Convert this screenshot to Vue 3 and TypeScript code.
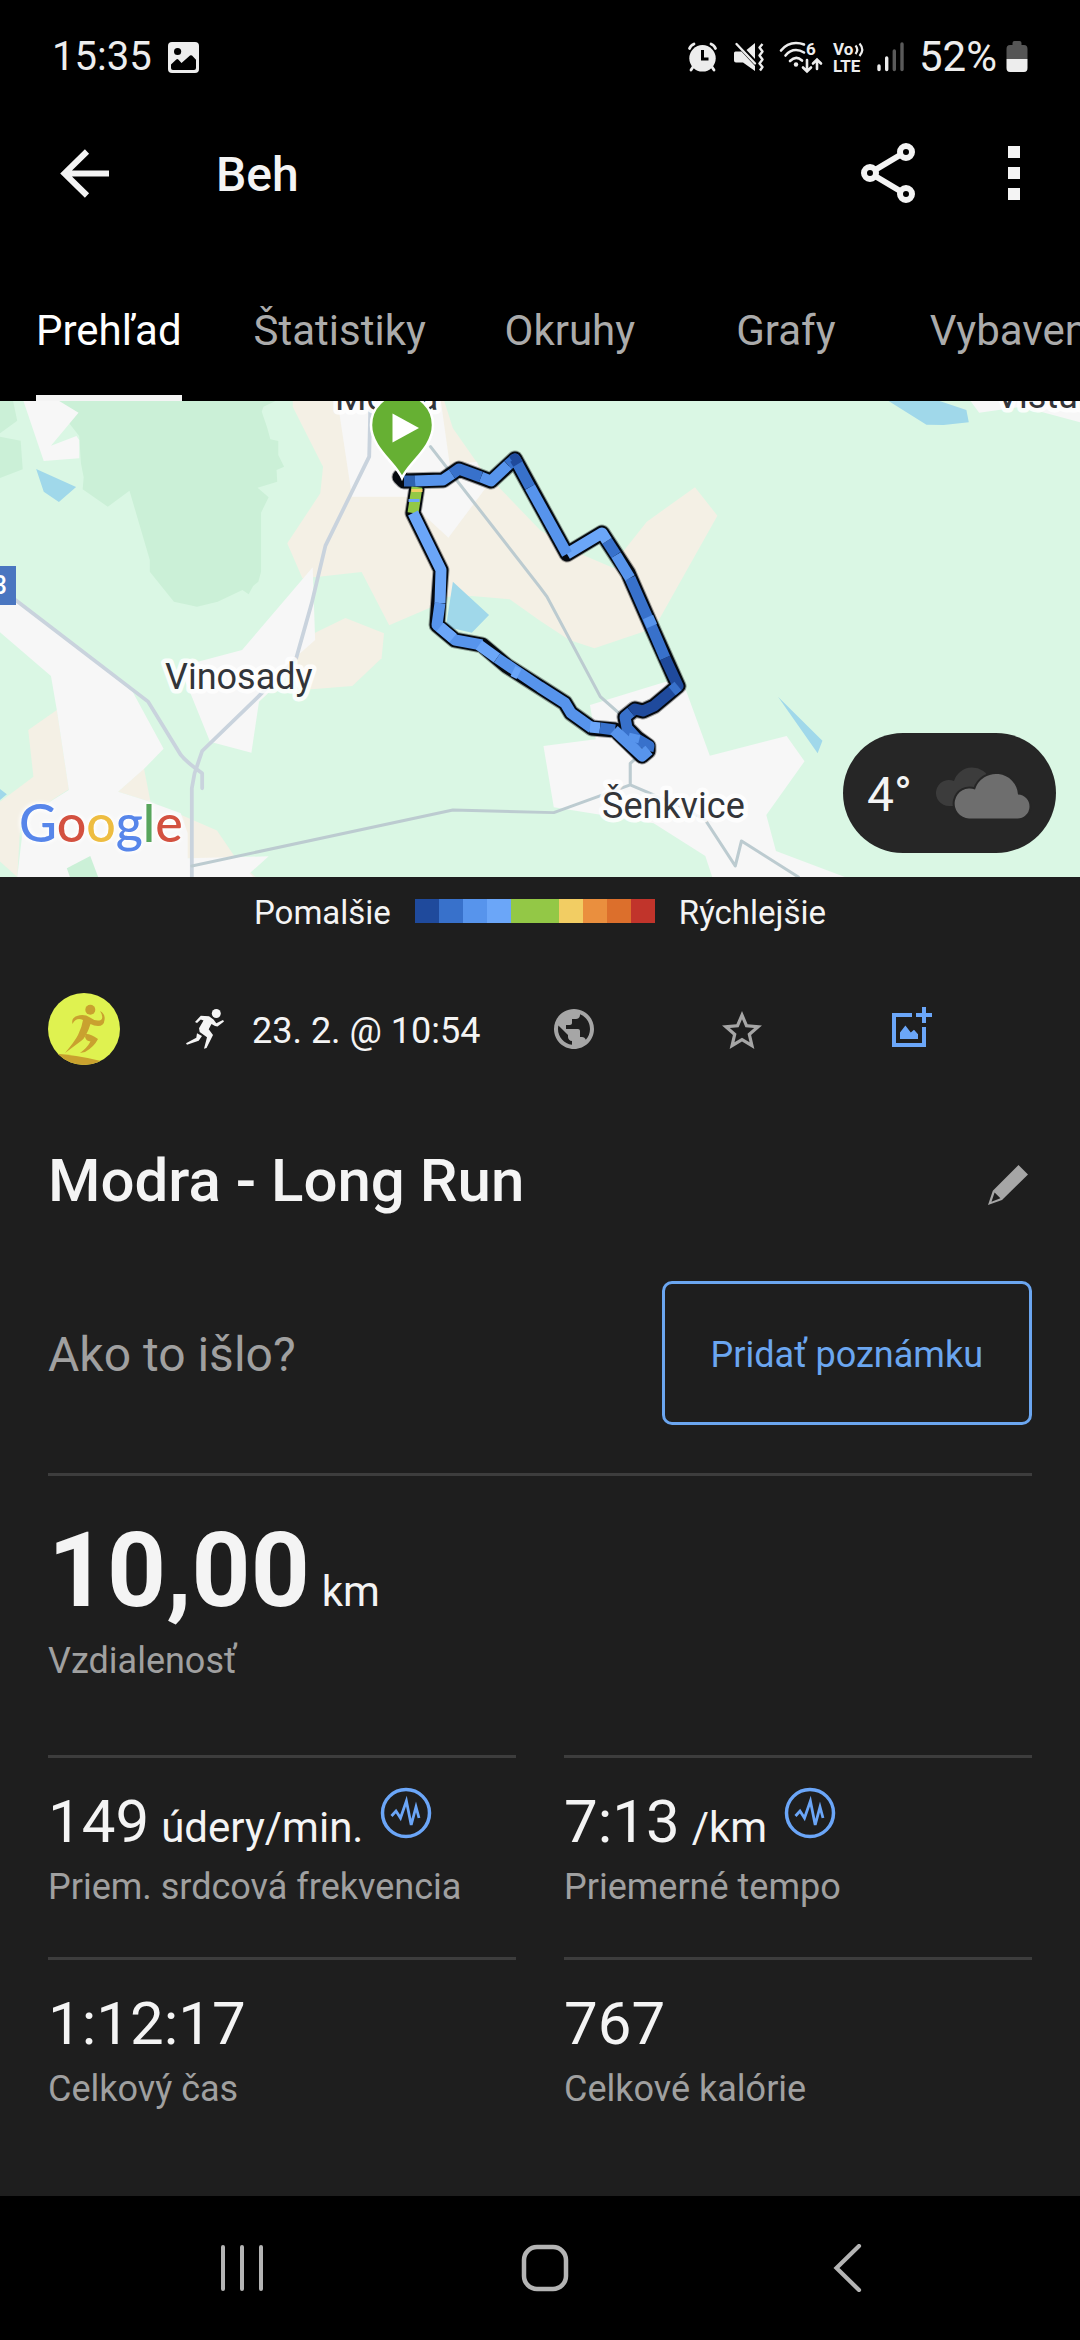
<script setup lang="ts">
import { ref } from 'vue'

interface RouteSegment {
  color: string
  points: string
}

interface Stat {
  value: string
  unit?: string
  label: string
  chart?: boolean
}

const tabs: string[] = ['Prehľad', 'Štatistiky', 'Okruhy', 'Grafy', 'Vybavenie']
const activeTab = ref<string>('Prehľad')

const pace: string[] = [
  '#1f4a9c', '#3871cb', '#5794ec', '#6ba6f8', '#93c846',
  '#93c846', '#f2cd63', '#ea8f3e', '#dc6f2c', '#c1342b',
]

const outline =
  '417,86 413,112 441,169 437,224 455,239 482,244 507,265 540,286 565,302 571,312 592,327 615,329 642,355 648,350 648,345 637,337 627,327 625,316 635,308 643,310 654,305 678,285 653,229 628,172 602,132 567,153 515,58 491,80 459,68 443,79 404,80 400,76'

const segments: RouteSegment[] = [
  { color: '#93c846', points: '417,86 413,112' },
  { color: '#f2cd63', points: '417,88 417,91' },
  { color: '#6ba6f8', points: '414,98 414,101' },
  { color: '#6ba6f8', points: '413,112 441,169 440,202' },
  { color: '#5794ec', points: '440,202 437,224 455,239 482,244' },
  { color: '#6ba6f8', points: '440,226 453,237' },
  { color: '#6ba6f8', points: '479,244 497,257' },
  { color: '#5794ec', points: '497,257 540,286 565,302 571,312 592,327' },
  { color: '#6ba6f8', points: '513,270 519,273' },
  { color: '#6ba6f8', points: '590,326 600,327' },
  { color: '#3871cb', points: '600,327 615,329' },
  { color: '#3871cb', points: '648,350 649,345 637,338 627,327 625,316 631,311' },
  { color: '#5794ec', points: '614,329 642,355 649,349' },
  { color: '#5794ec', points: '633,341 635,333' },
  { color: '#1f4a9c', points: '631,311 635,308 643,310 654,305 678,285 665,257' },
  { color: '#3871cb', points: '672,290 678,285' },
  { color: '#3871cb', points: '665,257 653,229 630,177' },
  { color: '#5794ec', points: '652,225 648,216' },
  { color: '#5794ec', points: '630,177 616,154' },
  { color: '#3871cb', points: '616,154 607,140' },
  { color: '#6ba6f8', points: '607,140 602,132 567,153' },
  { color: '#5794ec', points: '567,153 530,86' },
  { color: '#3871cb', points: '530,86 515,58 508,64' },
  { color: '#1f4a9c', points: '518,63 515,58 512,60' },
  { color: '#5794ec', points: '508,64 491,80 481,76' },
  { color: '#3871cb', points: '481,76 459,68 452,73' },
  { color: '#5794ec', points: '452,73 443,79 415,80' },
  { color: '#2f62b0', points: '415,80 404,80' },
]

const stats: Stat[] = [
  { value: '149', unit: 'údery/min.', label: 'Priem. srdcová frekvencia', chart: true },
  { value: '7:13', unit: '/km', label: 'Priemerné tempo', chart: true },
  { value: '1:12:17', label: 'Celkový čas' },
  { value: '767', label: 'Celkové kalórie' },
]
</script>

<template>
  <div class="screen">
    <header class="header">
      <div class="status">
        <span class="status-text">15:35</span>
        <svg class="status-photo" width="31" height="31" viewBox="0 0 31 31" aria-hidden="true">
          <rect width="31" height="31" rx="4" fill="#ededed" />
          <circle cx="9.6" cy="9.5" r="3.6" fill="#000" />
          <path d="M3 22.5L8.3 17.5Q9.3 16.700 10.300 17.600L13.500 21L22 13.500Q23 12.800 24 13.600L28 17.800V26Q28 28 26 28H5Q3 28 3 26Z" fill="#000" />
        </svg>
        <div class="status-icons">
          <svg width="36" height="32" viewBox="0 0 36 32" aria-hidden="true">
            <circle cx="16.500" cy="17.300" r="13.200" fill="#ededed" />
            <path d="M3.500 7.500Q4.500 4.500 8 3M29.500 7.500Q28.500 4.500 25 3M7 26L5 29M26 26L28 29" fill="none" stroke="#ededed" stroke-width="2.800" stroke-linecap="round" />
            <path d="M16.500 9V18H22.500" fill="none" stroke="#000" stroke-width="3" />
          </svg>
          <svg width="36" height="32" viewBox="0 0 36 32" aria-hidden="true">
            <path d="M4.500 10.500H10.500L24 25V30L12 21.500H5Q3 21.500 3 19.500V12Q3 10.500 4.500 10.500ZM15.500 9L24 2V18Z" fill="#ededed" />
            <path d="M5.500 3L24 22.500" stroke="#ededed" stroke-width="2.400" stroke-linecap="round" />
            <path d="M31.500 3L28.500 6.500L31.500 10.500L28.500 14.500L31.500 18.500L28.500 22.500L31.500 26L29 29.500" fill="none" stroke="#ededed" stroke-width="2.400" stroke-linejoin="round" />
          </svg>
          <svg width="48" height="32" viewBox="0 0 48 32" aria-hidden="true">
            <g fill="none" stroke="#ededed" stroke-width="2.600" stroke-linecap="round">
              <path d="M5 9.500Q11 2 20 2Q24.500 2 28 3.500M9.500 14.500Q14 9 20 9Q24 9 28 11.500M14 20Q20 14 26 19.500" />
              <path d="M31 19V30M27 26.500L31 30.500L35 26.500M41 28V18.500M37 22.500L41 18.500L45 22.500" />
            </g>
            <circle cx="20" cy="23.500" r="2.200" fill="#ededed" />
            <text x="30" y="14" class="glyph">6</text>
          </svg>
          <svg width="32" height="32" viewBox="0 0 32 32" aria-hidden="true">
            <text x="0" y="14" class="glyph">Vo</text>
            <text x="0" y="31" class="glyph">LTE</text>
            <path d="M22.500 4.500Q26 8.500 22.500 13M26.500 2.500Q32 8.500 26.500 15" fill="none" stroke="#ededed" stroke-width="2.200" />
          </svg>
          <svg width="36" height="32" viewBox="0 0 36 32" aria-hidden="true">
            <g stroke-width="3.400" stroke-linecap="round">
              <path d="M5 25V28.500M12.700 17V28.500" stroke="#ededed" />
              <path d="M20.300 10V28.500M28 3V28.500" stroke="#5a5a5a" />
            </g>
          </svg>
          <span class="status-text battery-level">52%</span>
          <svg width="22" height="32" viewBox="0 0 22 32" aria-hidden="true">
            <path d="M6.500 4V2Q6.500 0 8.500 0H13.500Q15.500 0 15.500 2V4H18Q21.500 4 21.500 8V18H0.500V8Q0.500 4 4 4Z" fill="#555" />
            <path d="M0.500 18H21.500V27Q21.500 31 18 31H4Q0.500 31 0.500 27Z" fill="#ededed" />
          </svg>
        </div>
      </div>

      <div class="toolbar">
        <button class="icon-button" type="button" aria-label="Späť">
          <svg width="72" height="72" viewBox="0 0 72 72">
            <path d="M39 14.500L16.500 36.500L39 58.500M16 36.500H61" fill="none" stroke="#f4f4f4" stroke-width="6" />
          </svg>
        </button>
        <h1 class="toolbar-title">Beh</h1>
        <button class="icon-button" type="button" aria-label="Zdieľať">
          <svg width="72" height="72" viewBox="0 0 72 72" fill="none" stroke="#f4f4f4" stroke-width="6">
            <path d="M23 33L49 17.500M23 39L49 54.500" />
            <circle cx="18" cy="36" r="6" />
            <circle cx="54" cy="15" r="6" />
            <circle cx="54" cy="57" r="6" />
          </svg>
        </button>
        <button class="icon-button" type="button" aria-label="Viac">
          <svg width="72" height="72" viewBox="0 0 72 72" fill="#f4f4f4">
            <path d="M30 9h12v12H30zM30 30h12v12H30zM30 51h12v12H30z" />
          </svg>
        </button>
      </div>

      <nav class="tabs">
        <button
          v-for="tab in tabs"
          :key="tab"
          type="button"
          class="tab"
          :class="{ active: tab === activeTab }"
          @click="activeTab = tab"
        >
          <span class="tab-label">{{ tab }}</span>
        </button>
      </nav>
    </header>

    <section class="map">
      <svg class="map-canvas" viewBox="0 0 1080 476" preserveAspectRatio="xMidYMid slice" role="img" aria-label="Mapa trasy">
        <rect width="1080" height="476" fill="#daf7e4" />
        <g transform="matrix(0.3444 0 0 0.3333 0 -11)">
          <path class="forest" d="M150 33H800L765 50L760 65L775 110L785 148L808 153V195L825 230L803 240L805 275L748 293L780 322L758 368V545L750 575L735 588L722 613L704 600L632 635L572 650L505 635L435 545V510L376 302L313 350L240 298L243 262L235 220L230 138Z" />
          <path class="forest" d="M0 33H38L50 92L0 130ZM0 140L60 152L66 238L0 264Z" />
          <path class="sand" d="M850 33H1290L1315 115L1400 240L1568 420L1693 495L1783 535L1813 480L1878 395L2018 292L2083 377L1913 690L1868 725L1726 775L1653 750L1568 692L1480 628L1370 618L1300 620L1245 655L1130 706L1050 546L925 560L878 565L834 460L930 310L938 230L850 50Z" />
          <path class="sand" d="M1003 684L1115 730L1108 805L1023 888L905 898L860 870L865 790L915 728Z" />
          <path class="sand" d="M165 960L200 1198L60 1290L50 1461L0 1415V1235L97 1160L82 1020ZM418 1135L437 1235L343 1205ZM510 1268L630 1322L685 1405H540ZM725 1445L742 1461H700Z" />
          <path class="urban" d="M68 33H172L228 68L148 167L222 138L230 150V205L127 213Z" />
          <path class="urban" d="M980 33H1280L1306 225L1385 215L1408 297L1302 443L1225 370L1180 320H1022Z" />
          <path class="urban" d="M908 532L915 750L860 800L830 860L752 935L730 1088L610 1055L555 915L520 830L703 780Z" />
          <path class="urban" d="M0 640L45 625L385 905L475 1076L420 1135L343 1205L420 1230L525 1270L545 1330V1405L780 1399L725 1450L735 1461H50L65 1330L60 1290L200 1200L165 960L148 858L0 727Z" />
          <path class="urban" d="M1713 945L1933 875L1988 890L2061 1097L2284 1038L2336 1114L2225 1275L2253 1383L2453 1461H2068L2048 1398L1898 1300L1608 1252L1578 1068L1730 1048Z" />
          <path class="urban" d="M2818 33H3136V97L2968 50L2843 68Z" />
          <path class="forest" d="M194 1435L262 1398L285 1461H203Z" />
          <path class="water" d="M105 237L221 291L171 336L127 305ZM0 1197L20 1213L0 1230ZM1315 575L1420 675L1370 728L1295 710ZM2580 33H2728L2806 60L2813 97L2740 105L2690 104ZM2259 920L2388 1052L2374 1090Z" />
          <g class="road">
            <path d="M45 630L430 935L525 1095Q540 1115 587 1150V1195" />
            <path d="M1075 60L1072 200L945 467L905 640L860 805L750 920L587 1083L565 1150L557 1195V1461" />
          </g>
          <g class="road thin">
            <path d="M1250 170L1568 592L1588 620L1743 920L1803 975" />
            <path d="M557 1428L1315 1260L1608 1268L1830 1185L1978 1250L2048 1290L2135 1428L2153 1353L2318 1461M1830 1185V1120L1858 1095" />
          </g>
        </g>
        <g class="place">
          <text x="335" y="9">Modra</text>
          <text x="165" y="288">Vinosady</text>
          <text x="602" y="417">Šenkvice</text>
          <text x="996" y="7">Vištuk</text>
        </g>
        <rect x="-40" y="165" width="56" height="39" fill="#4a76c0" />
        <text class="road-number" x="7" y="193">3</text>

        <polyline :points="outline" class="route-shadow" />
        <polyline :points="outline" class="route-outline" />
        <polyline
          v-for="(segment, index) in segments"
          :key="index"
          :points="segment.points"
          :stroke="segment.color"
          class="route-line"
        />

        <path d="M402 77C396 62 371 47 371 24A31 31 0 0 1 433 24C433 47 408 62 402 77Z" fill="#66b033" stroke="#fff" stroke-width="2.500" />
        <path d="M392.500 12.500L419 27L392.500 41.500Z" fill="#fff" />

        <text class="google" x="19" y="441"><tspan fill="#5786ea">G</tspan><tspan fill="#d35140">o</tspan><tspan fill="#eebd41">o</tspan><tspan fill="#5786ea">g</tspan><tspan fill="#58a55c">l</tspan><tspan fill="#d35140">e</tspan></text>
      </svg>
      <div class="weather">
        <span class="temperature">4°</span>
        <svg width="96" height="54" viewBox="0 0 96 54" aria-hidden="true">
          <path d="M13 40A13 13 0 1 1 18 15A19 19 0 0 1 54 14L36 40Z" fill="#3c3c3c" />
          <path d="M33 52.500A15 15 0 1 1 39 23.500A22 22 0 0 1 82 28.500A12 12 0 0 1 81 52.500Z" fill="#6e6e6e" stroke="#262626" stroke-width="4" paint-order="stroke" />
        </svg>
      </div>
    </section>

    <main class="content">
      <div class="legend">
        <span class="legend-text">Pomalšie</span>
        <div class="legend-bar">
          <i v-for="(color, index) in pace" :key="index" :style="{ background: color }"></i>
        </div>
        <span class="legend-text">Rýchlejšie</span>
      </div>

      <div class="meta">
        <svg width="72" height="72" viewBox="0 0 72 72" role="img" aria-label="Profil">
          <clipPath id="avatar"><circle cx="36" cy="36" r="36" /></clipPath>
          <g clip-path="url(#avatar)">
            <rect width="72" height="72" fill="#dff250" />
            <g fill="#c9a12f">
              <path d="M0 60Q30 62 53 68L50 76H0Z" />
              <circle cx="42.300" cy="16.700" r="5" />
              <path d="M24.500 31Q23 25 29 23Q36 20.500 42 24.500Q48 29 53 27Q56 24 52 18Q57.500 21 56.500 27Q56 33 50 33Q46 33 42.500 31Q38 45 33 48L17 60Q27 48 30 42Q34 34 35 27Q28 24 24.500 31Z" />
              <path d="M38 41Q42 40.500 50 46Q46 54 37 59L32 60Q39 55 42.500 48.500Q38 48 37 44Z" />
            </g>
          </g>
        </svg>
        <svg class="run" width="48" height="48" viewBox="0 0 48 48" fill="#f4f4f4" aria-hidden="true">
          <circle cx="36.300" cy="8.500" r="4.500" />
          <path d="M20.800 10.700L29 11.300L33.500 14.500L36.300 18.300L43 15L44 16.500L37.500 21.500L35 21L31.500 19L28.700 24.300L33 30L26.500 43L24 43.700L27 32.300L19.700 27L19 23.300L23.500 15.500L20.800 14.500L17 18L15 17ZM17 28.300L22 31L18.700 35.700L7 39.700L6 38.300L16.300 32.700Z" />
        </svg>
        <time class="date">23. 2. @ 10:54</time>
        <div class="meta-actions">
          <button type="button" aria-label="Súkromie">
            <svg width="48" height="48" viewBox="0 0 24 24" fill="#a6a6a6">
              <path d="M12 2C6.480 2 2 6.480 2 12s4.480 10 10 10 10-4.480 10-10S17.520 2 12 2zm-1 17.930c-3.950-.49-7-3.850-7-7.930 0-.62.08-1.210.21-1.790L9 15v1c0 1.100.9 2 2 2v1.930zm6.900-2.540c-.26-.81-1-1.390-1.900-1.390h-1v-3c0-.55-.45-1-1-1H8v-2h2c.55 0 1-.45 1-1V7h2c1.100 0 2-.9 2-2v-.41c2.930 1.190 5 4.060 5 7.410 0 2.080-.8 3.970-2.100 5.390z" />
            </svg>
          </button>
          <button type="button" aria-label="Obľúbené">
            <svg width="48" height="48" viewBox="0 -1 24 24" fill="#a6a6a6">
              <path d="M22 9.240l-7.190-.62L12 2 9.190 8.630 2 9.240l5.460 4.730L5.820 21 12 17.270 18.180 21l-1.630-7.030L22 9.240zM12 15.400l-3.760 2.270 1-4.280-3.320-2.880 4.380-.38L12 6.100l1.710 4.040 4.380.38-3.320 2.880 1 4.280L12 15.400z" />
            </svg>
          </button>
          <button type="button" aria-label="Pridať fotografiu">
            <svg width="48" height="48" viewBox="0 0 24 24" fill="#6ba6f8">
              <path d="M13 4H3V21H20V11H18V19H5V6H13ZM18 1H20V4H23V6H20V9H18V6H15V4H18ZM7 17V13.800L9.700 10.200L12.400 13.800L14 12.400L16 14.600V17Z" />
            </svg>
          </button>
        </div>
      </div>

      <div class="title-row">
        <h2>Modra - Long Run</h2>
        <button type="button" aria-label="Upraviť názov">
          <svg width="48" height="48" viewBox="0 0 48 48" fill="#a6a6a6" fill-rule="evenodd">
            <path d="M34.500 4L44 13.500L18 39L4 44L8.800 29.700ZM10.600 31.500L7.500 40.800L16.400 37.300Z" />
          </svg>
        </button>
      </div>

      <div class="note">
        <p>Ako to išlo?</p>
        <button type="button">Pridať poznámku</button>
      </div>

      <div class="distance">
        <p class="distance-value">10,00<span class="unit">km</span></p>
        <p class="label">Vzdialenosť</p>
      </div>

      <div class="stats">
        <div v-for="stat in stats" :key="stat.label" class="stat">
          <div class="stat-line">
            <p class="stat-value">{{ stat.value }}<span v-if="stat.unit" class="unit">{{ stat.unit }}</span></p>
            <button v-if="stat.chart" type="button" aria-label="Zobraziť graf">
              <svg width="54" height="54" viewBox="0 0 54 54" fill="none" stroke="#6ba6f8">
                <circle cx="27" cy="27" r="23.500" stroke-width="3.500" />
                <path d="M12.500 30L17 25L21.500 32L27.400 15L32.200 39L37 21L40 32" stroke-width="2.800" />
              </svg>
            </button>
          </div>
          <p class="label">{{ stat.label }}</p>
        </div>
      </div>
    </main>

    <nav class="system-nav">
      <button type="button" aria-label="Posledné aplikácie">
        <svg width="48" height="48" viewBox="0 0 48 48"><path d="M5 3V45M24 3V45M43 3V45" stroke="#b4b4b4" stroke-width="4" stroke-linecap="round" /></svg>
      </button>
      <button type="button" aria-label="Domov">
        <svg width="48" height="48" viewBox="0 0 48 48"><rect x="3" y="3" width="42" height="42" rx="13" fill="none" stroke="#b4b4b4" stroke-width="4.500" /></svg>
      </button>
      <button type="button" aria-label="Späť v systéme">
        <svg width="48" height="48" viewBox="0 0 48 48"><path d="M35 2L12.500 24L35 46" fill="none" stroke="#b4b4b4" stroke-width="4.200" stroke-linecap="round" /></svg>
      </button>
    </nav>
  </div>
</template>

<style>
body {
  margin: 0;
  background: #1e1e1e;
}
</style>

<style scoped>
.screen {
  display: flex;
  flex-direction: column;
  min-height: 100vh;
  overflow: hidden;
  background: #1e1e1e;
  color: #f4f4f4;
  font-family: Roboto, 'Noto Sans', sans-serif;
}

svg {
  display: block;
  flex: none;
}

button {
  margin: 0;
  padding: 0;
  border: 0;
  background: none;
  color: inherit;
  font: inherit;
  cursor: pointer;
}

h1,
h2,
p {
  margin: 0;
}

.header {
  background: #000;
}

.status {
  display: flex;
  align-items: center;
  box-sizing: border-box;
  height: 89px;
  padding: 25px 52px 0;
}

.status-text {
  color: #ededed;
  font-size: 40px;
  line-height: 48px;
}

.battery-level {
  font-size: 42px;
}

.status-photo {
  margin-left: 16px;
}

.status-icons {
  display: flex;
  align-items: center;
  gap: 9px;
  margin-left: auto;
}

.status-icons svg {
  overflow: visible;
}

.glyph {
  fill: #ededed;
  font-size: 17px;
  font-weight: 700;
}

.toolbar {
  display: flex;
  align-items: center;
  height: 168px;
  padding: 0 30px 0 48px;
}

.icon-button + .icon-button {
  margin-left: 54px;
}

.toolbar-title {
  flex: 1;
  margin-left: 96px;
  padding-top: 4px;
  font-size: 48px;
  font-weight: 500;
  line-height: 60px;
}

.tabs {
  display: flex;
  height: 144px;
  overflow: hidden;
}

.tab {
  flex: none;
  min-width: 216px;
  padding: 0 36px;
  color: #ababab;
  font-size: 42px;
  line-height: 48px;
}

.tab-label {
  display: flex;
  align-items: center;
  justify-content: center;
  box-sizing: border-box;
  height: 144px;
  padding-top: 4px;
  border: solid transparent;
  border-width: 6px 0;
}

.tab.active {
  color: #fff;
}

.tab.active .tab-label {
  border-bottom-color: #f4f4f4;
}

.map {
  position: relative;
  height: 476px;
}

.map-canvas {
  width: 100%;
  height: 100%;
}

.forest {
  fill: #cbf0d7;
}

.sand {
  fill: #f4f0e5;
}

.urban {
  fill: #f7f7f7;
}

.water {
  fill: #a0d8ea;
}

.road {
  fill: none;
  stroke: #c9d3dd;
  stroke-width: 11;
  stroke-linejoin: round;
  stroke-linecap: round;
}

.road.thin {
  stroke: #bccbd0;
  stroke-width: 9;
}

.place {
  fill: #333539;
  stroke: #fff;
  stroke-opacity: 0.85;
  stroke-width: 9px;
  stroke-linejoin: round;
  paint-order: stroke;
  font-size: 36px;
}

.road-number {
  fill: #fff;
  font-size: 25px;
  font-weight: 500;
  text-anchor: end;
}

.route-shadow,
.route-outline,
.route-line {
  fill: none;
  stroke-linejoin: round;
}

.route-shadow {
  stroke: #000;
  stroke-opacity: 0.35;
  stroke-width: 17;
  stroke-linecap: round;
}

.route-outline {
  stroke: #05090f;
  stroke-width: 15;
  stroke-linecap: round;
}

.route-line {
  stroke-width: 11;
}

.google {
  font-family: Lato, 'Open Sans', sans-serif;
  font-size: 52px;
  font-weight: 500;
  filter: drop-shadow(0 0 2px #fff) drop-shadow(0 0 2px #fff);
}

.weather {
  position: absolute;
  right: 24px;
  bottom: 24px;
  display: flex;
  align-items: center;
  justify-content: space-between;
  box-sizing: border-box;
  width: 213px;
  height: 120px;
  padding: 0 24px;
  border-radius: 60px;
  background: #262626;
  font-size: 48px;
  line-height: 60px;
}

.temperature {
  padding-top: 4px;
}

.content {
  flex: 1;
  padding: 0 48px 37px;
}

.legend {
  display: flex;
  align-items: center;
  justify-content: center;
  gap: 24px;
  height: 68px;
  font-size: 33px;
  line-height: 40px;
}

.legend-text {
  padding-top: 4px;
}

.legend-bar {
  display: flex;
}

.legend-bar i {
  width: 24px;
  height: 24px;
}

.meta {
  display: flex;
  align-items: center;
  margin-top: 48px;
}

.run {
  margin-left: 60px;
}

.date {
  margin-left: 24px;
  padding-top: 4px;
  font-size: 36px;
  line-height: 48px;
}

.meta-actions {
  display: flex;
  margin-right: 38px;
  margin-left: auto;
}

.meta-actions button {
  display: flex;
  justify-content: center;
  width: 168px;
}

.title-row {
  display: flex;
  align-items: center;
  justify-content: space-between;
  height: 80px;
  margin-top: 80px;
}

.title-row h2 {
  align-self: flex-start;
  font-size: 60px;
  font-weight: 500;
  line-height: 72px;
}

.note {
  display: flex;
  align-items: center;
  justify-content: space-between;
  margin-top: 56px;
}

.note p {
  padding-top: 4px;
  color: #a0a0a0;
  font-size: 48px;
  line-height: 60px;
}

.note button {
  height: 144px;
  padding: 4px 46px 0;
  border: 3px solid #6ba6f0;
  border-radius: 10px;
  color: #6ba6f0;
  font-size: 36px;
  line-height: 48px;
}

.distance {
  margin-top: 48px;
  padding: 35px 0 70px;
  border-top: 3px solid #3d3d3d;
}

.distance-value {
  margin-bottom: 6px;
  font-size: 103px;
  font-weight: 700;
  line-height: 120px;
}

.unit {
  margin-left: 12px;
  font-size: 42px;
  font-weight: 400;
  line-height: 48px;
}

.label {
  color: #a0a0a0;
  font-size: 36px;
  line-height: 48px;
}

.stats {
  display: grid;
  grid-template-columns: 1fr 1fr;
  column-gap: 48px;
}

.stat {
  padding: 28px 0 46px;
  border-top: 3px solid #3d3d3d;
}

.stat-line {
  display: flex;
  align-items: flex-start;
  gap: 16px;
  margin-bottom: 5px;
}

.stat-value {
  font-size: 60px;
  line-height: 72px;
}

.system-nav {
  display: flex;
  height: 144px;
  padding: 0 80px 0 90px;
  background: #000;
}

.system-nav button {
  display: flex;
  flex: 1;
  align-items: center;
  justify-content: center;
}
</style>
